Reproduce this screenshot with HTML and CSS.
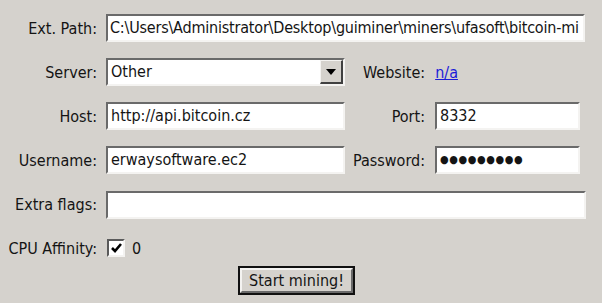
FILE: index.html
```html
<!DOCTYPE html>
<html lang="en">
<head>
    <meta charset="UTF-8">
    <title>GUIMiner</title>
    <link rel="stylesheet" href="styles.css">
</head>
<body>
<div class="panel">
    <div class="form">
        <label class="label">Ext. Path:</label>
        <div class="field wide path">C:\Users\Administrator\Desktop\guiminer\miners\ufasoft\bitcoin-mi</div>

        <label class="label">Server:</label>
        <div class="field combo">
            <span class="combo-text">Other</span>
            <span class="combo-btn"><span class="arrow"></span></span>
        </div>
        <div class="website">
            <span>Website:</span>
            <a href="#" class="link">n/a</a>
        </div>

        <label class="label">Host:</label>
        <div class="field">http://api.bitcoin.cz</div>
        <label class="label right">Port:</label>
        <div class="field">8332</div>

        <label class="label">Username:</label>
        <div class="field">erwaysoftware.ec2</div>
        <label class="label right">Password:</label>
        <div class="field dots">●●●●●●●●●</div>

        <label class="label">Extra flags:</label>
        <div class="field wide full"></div>

        <label class="label">CPU Affinity:</label>
        <div class="affinity">
            <span class="check">
                <svg width="11" height="10" viewBox="0 0 11 10">
                    <path d="M1 5 L4 8 L10 1" fill="none" stroke="#000" stroke-width="2.6"/>
                </svg>
            </span>
            <span>0</span>
        </div>
    </div>
    <div class="actions">
        <button class="start-btn"><span>Start mining!</span></button>
    </div>
</div>
</body>
</html>
```

FILE: styles.css
```css
body {
    margin: 0;
    padding: 0;
    background-color: #d5d2cd;
    font-family: "DejaVu Sans Condensed", "DejaVu Sans", sans-serif;
    font-size: 16px;
    color: #141414;
}
.panel {
    width: 602px;
    height: 303px;
    padding-top: 14px;
    box-sizing: border-box;
}
.form {
    display: grid;
    grid-template-columns: 106px 239px 90px 145px 6px;
    grid-auto-rows: 28px;
    row-gap: 16px;
    align-items: center;
}
.label {
    grid-column: 1;
    text-align: right;
    padding-right: 9px;
    white-space: nowrap;
}
.label.right {
    grid-column: 3;
    padding-right: 10px;
}
.field {
    height: 28px;
    box-sizing: border-box;
    background: #fff;
    border-top: 2px solid #6a6a6a;
    border-left: 2px solid #6a6a6a;
    border-right: 2px solid #f4f3f1;
    border-bottom: 2px solid #f4f3f1;
    padding: 0 3px;
    line-height: 24px;
    white-space: nowrap;
    overflow: hidden;
}
.field.wide {
    grid-column: 2 / 6;
    margin-right: 1px;
}
.path {
    letter-spacing: -0.2px;
    padding-left: 2px;
}
.field.full {
    margin-right: 0;
}
.form .field.full {
    margin-top: 2px;
}
.dots {
    font-size: 11px;
    letter-spacing: 0.6px;
}
.combo {
    display: flex;
    align-items: stretch;
    padding-right: 0;
}
.combo-text {
    flex: 1;
}
.combo-btn {
    width: 20px;
    background: #d5d2cd;
    border-top: 1px solid #f4f3f1;
    border-left: 1px solid #f4f3f1;
    border-right: 2px solid #404040;
    border-bottom: 2px solid #404040;
    display: flex;
    align-items: center;
    justify-content: center;
}
.arrow {
    width: 0;
    height: 0;
    border-left: 5px solid transparent;
    border-right: 5px solid transparent;
    border-top: 6px solid #000;
}
.website {
    grid-column: 3 / 6;
    display: flex;
    gap: 10px;
    padding-left: 18px;
}
.link {
    color: #1c1cd8;
    text-decoration: underline;
}
.affinity {
    grid-column: 2 / 4;
    display: flex;
    align-items: center;
    gap: 7px;
    padding-left: 1px;
}
.check {
    width: 18px;
    height: 18px;
    box-sizing: border-box;
    background: #fff;
    border-top: 2px solid #5a5a5a;
    border-left: 2px solid #5a5a5a;
    border-right: 2px solid #f4f3f1;
    border-bottom: 2px solid #f4f3f1;
    display: flex;
    align-items: center;
    justify-content: center;
}
.actions {
    padding-left: 238px;
    margin-top: 4px;
}
.start-btn {
    width: 117px;
    height: 29px;
    padding: 0;
    border: 2px solid #111;
    background: #111;
    font-family: inherit;
    font-size: 16px;
    color: #141414;
    cursor: pointer;
}
.start-btn span {
    display: block;
    height: 100%;
    box-sizing: border-box;
    background: #d5d2cd;
    border-top: 2px solid #f4f3f1;
    border-left: 2px solid #f4f3f1;
    border-right: 2px solid #6a6a6a;
    border-bottom: 2px solid #6a6a6a;
    line-height: 21px;
}
```
